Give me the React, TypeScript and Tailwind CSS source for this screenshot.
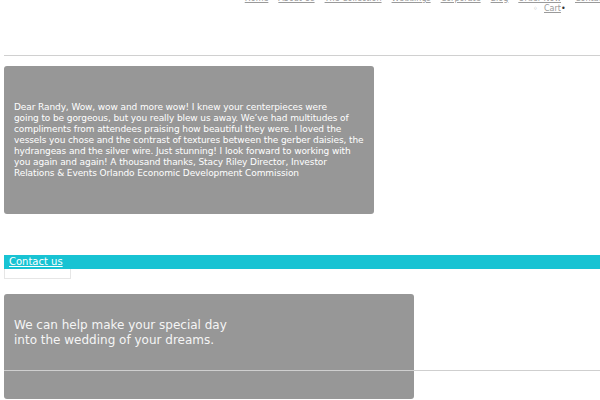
const menu = ['Home', 'About Us', 'The Collection', 'Weddings', 'Corporate', 'Blog', 'Order Now'];

const testimonial = [
  'Dear Randy, Wow, wow and more wow! I knew your centerpieces were',
  'going to be gorgeous, but you really blew us away. We\u2019ve had multitudes of',
  'compliments from attendees praising how beautiful they were. I loved the',
  'vessels you chose and the contrast of textures between the gerber daisies, the',
  'hydrangeas and the silver wire. Just stunning! I look forward to working with',
  'you again and again! A thousand thanks, Stacy Riley Director, Investor',
  'Relations & Events Orlando Economic Development Commission',
];

export default function App() {
  return (
    <div className="w-[600px] h-[400px] overflow-hidden bg-white pl-[4px] font-['DejaVu_Sans',sans-serif]">
      {/* menu, shoved up past the top edge */}
      <nav className="flex flex-col h-[14px] text-[8px] leading-[10px] text-[#9a9a9a] whitespace-nowrap">
        <div className="-mt-[6px]">
          <div className="flex ml-[236px]">
            <span className="w-[13px]">•</span>
            {menu.map((m) => (
              <a key={m} href="#" className="underline mr-[10px]">
                {m}
              </a>
            ))}
            <a href="#" className="underline -ml-[8px] pl-[12px]">Contact Us</a>
          </div>
          <div className="flex ml-[529px]">
            <span className="w-[11px]">◦</span>
            <a href="#" className="underline">Cart</a>
            <span className="text-[#333]">•</span>
          </div>
        </div>
      </nav>

      <div className="mt-[41px] h-px bg-[#d0d0d0]" />

      <div className="mt-[10px] w-[370px] h-[148px] rounded-[3px] bg-[#979797] px-[10px] flex items-center">
        <p className="text-[9px] leading-[11px] text-white whitespace-nowrap tracking-[-0.1px]">
          {testimonial.map((l) => (
            <span key={l} className="block">
              {l}
            </span>
          ))}
        </p>
      </div>

      <div className="mt-[41px] h-[14px] bg-[#18c3d3]">
        <a href="#" className="block pl-[5px] text-[10px] leading-[14px] text-white underline">
          Contact us
        </a>
      </div>
      <div className="w-[67px] h-[10px] border border-t-0 border-[#e6e6e6]" />

      <div className="relative mt-[15px]">
        <div className="w-[410px] h-[105px] rounded-[3px] bg-[#979797] pt-[24px] pl-[10px]">
          <p className="w-[230px] text-[12px] leading-[15px] text-[#f5f5f5]">
            We can help make your special day into the wedding of your dreams.
          </p>
        </div>
        <div className="absolute left-0 top-[76px] w-[596px] h-px bg-[#cfcfcf]" />
      </div>
    </div>
  );
}
